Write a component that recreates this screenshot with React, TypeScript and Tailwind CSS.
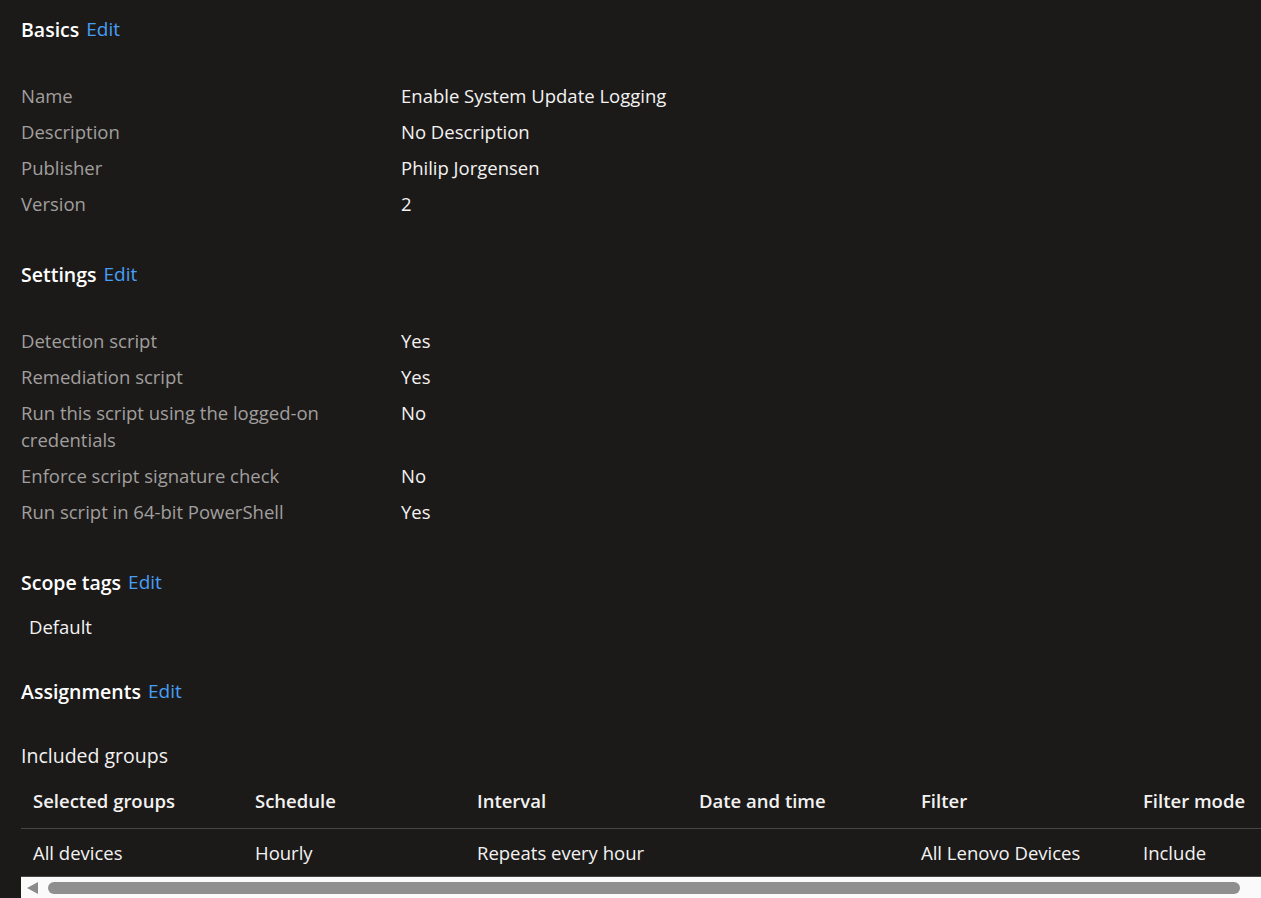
const font = { fontFamily: '"Open Sans", "Noto Sans", sans-serif' };

type Row = { label: string; value: string };

const basics: Row[] = [
  { label: "Name", value: "Enable System Update Logging" },
  { label: "Description", value: "No Description" },
  { label: "Publisher", value: "Philip Jorgensen" },
  { label: "Version", value: "2" },
];

const settings: Row[] = [
  { label: "Detection script", value: "Yes" },
  { label: "Remediation script", value: "Yes" },
  { label: "Run this script using the logged-on credentials", value: "No" },
  { label: "Enforce script signature check", value: "No" },
  { label: "Run script in 64-bit PowerShell", value: "Yes" },
];

const columns = ["Selected groups", "Schedule", "Interval", "Date and time", "Filter", "Filter mode"];
const groupRow = ["All devices", "Hourly", "Repeats every hour", "", "All Lenovo Devices", "Include"];

function SectionTitle({ title }: { title: string }) {
  return (
    <h2 className="flex h-[27px] items-center gap-[7px] leading-[27px]">
      <span className="text-[19.5px] font-semibold text-[#ffffff]">{title}</span>
      <a href="#" className="text-[19px] text-[#479ef5]">
        Edit
      </a>
    </h2>
  );
}

function PropertyList({ rows }: { rows: Row[] }) {
  return (
    <dl>
      {rows.map((r) => (
        <div key={r.label} className="flex pt-[4px] pb-[5px] text-[18.5px] leading-[27px]">
          <dt className="w-[380px] shrink-0 pr-[40px] text-[#a19f9d]">{r.label}</dt>
          <dd className="text-[#f3f2f1]">{r.value}</dd>
        </div>
      ))}
    </dl>
  );
}

export default function App() {
  return (
    <div style={font} className="h-[898px] w-[1261px] overflow-hidden bg-[#1b1a19] pl-[21px] pt-[16px]">
      <SectionTitle title="Basics" />
      <div className="mt-[35px]">
        <PropertyList rows={basics} />
      </div>

      <div className="mt-[39px]">
        <SectionTitle title="Settings" />
      </div>
      <div className="mt-[35px]">
        <PropertyList rows={settings} />
      </div>

      <div className="mt-[39px]">
        <SectionTitle title="Scope tags" />
      </div>
      <p className="mt-[17px] pl-[8px] text-[18.5px] leading-[27px] text-[#f3f2f1]">Default</p>

      <div className="mt-[38px]">
        <SectionTitle title="Assignments" />
      </div>
      <p className="mt-[37px] text-[19.5px] leading-[27px] text-[#f3f2f1]">Included groups</p>

      <div className="mt-[6px] overflow-hidden">
        <table className="w-[1332px] table-fixed border-collapse text-[18.5px]">
          <thead>
            <tr className="border-b border-[#484644]">
              {columns.map((c) => (
                <th key={c} className="h-[53px] w-[222px] px-[12px] text-left font-semibold text-[#f3f2f1]">
                  {c}
                </th>
              ))}
            </tr>
          </thead>
          <tbody>
            <tr className="border-b border-[#484644]">
              {groupRow.map((v, i) => (
                <td key={i} className="h-[48px] px-[12px] pt-[2px] text-[#f3f2f1]">
                  {v}
                </td>
              ))}
            </tr>
          </tbody>
        </table>
      </div>

      <div className="flex h-[22px] items-center bg-[#fafafa] pl-[6px]">
        <svg width="11" height="12" viewBox="0 0 11 12" className="shrink-0">
          <path d="M11 0 L0 6 L11 12 Z" fill="#8a8a8a" />
        </svg>
        <div className="ml-[10px] h-[12px] w-[1192px] rounded-full bg-[#8f8f8f]" />
      </div>
    </div>
  );
}
